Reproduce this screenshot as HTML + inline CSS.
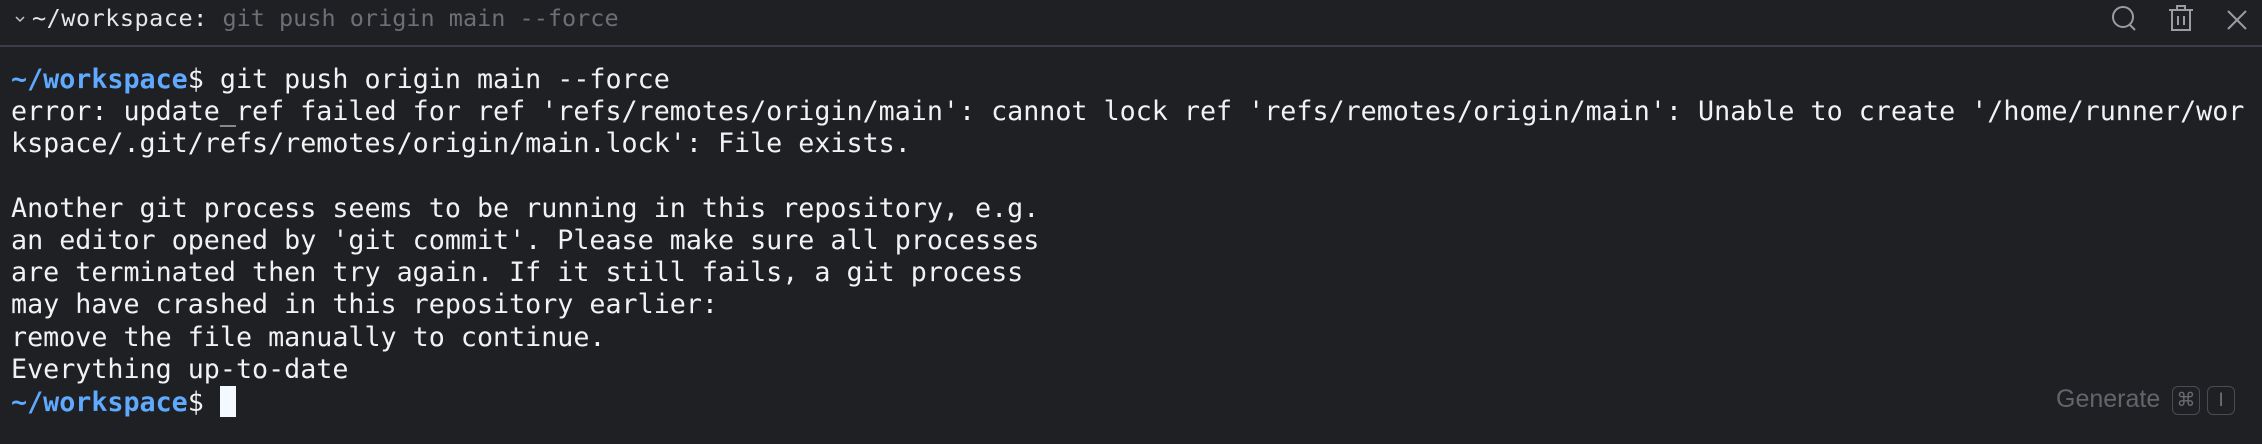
<html><head><style>
body{margin:0;width:2262px;height:444px;background:#1f2024;overflow:hidden;position:relative;font-family:"DejaVu Sans Mono","Liberation Mono",monospace}
.hdr{position:absolute;left:0;top:0;width:2262px;height:45px;background:#1f2024;border-bottom:2px solid #3a3d4b}
.ht{position:absolute;left:32px;top:3px;font-size:23.5px;line-height:30px;color:#e6e6e6;white-space:pre;letter-spacing:0.5px}
.ht span{color:#6d6f76;letter-spacing:0}
pre{position:absolute;left:11px;top:64px;margin:0;font-size:26.7px;line-height:32.2px;color:#f2f2f2;font-family:"DejaVu Sans Mono",monospace}
b{color:#5fa9ff}
.cur{display:inline-block;width:16px;height:31px;background:#f4f8ff;vertical-align:-6px}
.gen{position:absolute;left:2056px;top:385px;font-family:"Liberation Sans",sans-serif;font-size:25px;color:#63656b}
.k{position:absolute;top:386px;width:26px;height:27px;border:1.5px solid #4a4c52;border-radius:6px;color:#6a6c72;font-size:19px;text-align:center;line-height:27px;font-family:"DejaVu Sans",sans-serif}
</style></head><body>
<div class="hdr">
<svg style="position:absolute;left:13px;top:13px" width="14" height="12" viewBox="0 0 14 12"><path d="M3 4l4 4 4-4" stroke="#c8c8c8" stroke-width="1.5" fill="none"/></svg>
<div class="ht">~/workspace: <span>git push origin main --force</span></div>
<svg style="position:absolute;left:2110px;top:4px" width="30" height="30" viewBox="0 0 30 30" fill="none" stroke="#9a9ca2" stroke-width="2"><circle cx="13" cy="13" r="10"/><path d="M20 21l5 5"/></svg>
<svg style="position:absolute;left:2167px;top:3px" width="28" height="30" viewBox="0 0 28 30" fill="none" stroke="#9a9ca2" stroke-width="2"><path d="M2 7h24M10 7V3h8v4M5 7v20h18V7M11 13v9M17 13v9"/></svg>
<svg style="position:absolute;left:2226px;top:9px" width="22" height="22" viewBox="0 0 22 22" stroke="#9a9ca2" stroke-width="2"><path d="M2 2l18 18M20 2L2 20"/></svg>
</div>
<pre><b>~/workspace</b>$ git push origin main --force
error: update_ref failed for ref 'refs/remotes/origin/main': cannot lock ref 'refs/remotes/origin/main': Unable to create '/home/runner/wor
kspace/.git/refs/remotes/origin/main.lock': File exists.

Another git process seems to be running in this repository, e.g.
an editor opened by 'git commit'. Please make sure all processes
are terminated then try again. If it still fails, a git process
may have crashed in this repository earlier:
remove the file manually to continue.
Everything up-to-date
<b>~/workspace</b>$ <span class="cur"></span></pre>
<div class="gen">Generate</div>
<div class="k" style="left:2172px">⌘</div>
<div class="k" style="left:2207px">I</div>
</body></html>
